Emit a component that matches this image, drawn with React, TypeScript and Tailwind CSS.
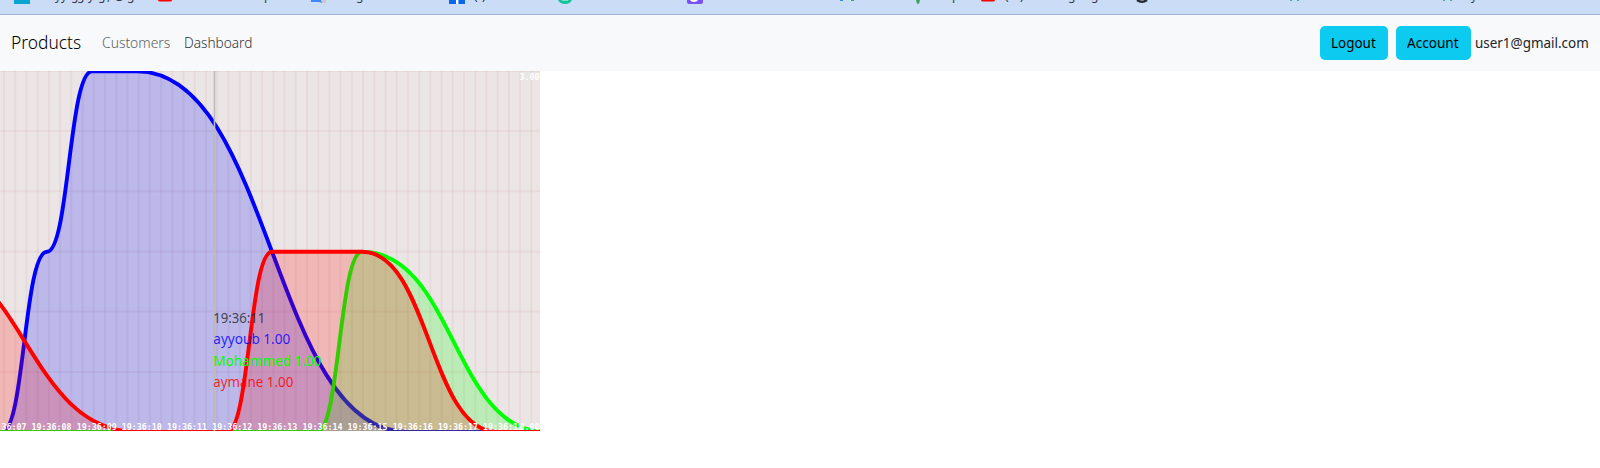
import type { ReactNode } from 'react';

const grid = Array.from({ length: 49 }, (_, i) => 4 + i * 11.22);
const rows = [0, 60, 120.3, 180.7, 240.5, 301];
const labels = ['19:36:07', '19:36:08', '19:36:09', '19:36:10', '19:36:11', '19:36:12', '19:36:13', '19:36:14', '19:36:15', '19:36:16', '19:36:17', '19:36:18'];

const series = [
  {
    line: 'M-10 361H2C24.5 361 24 180.7 47 180.7C69 180.7 69 .4 92 .4H137C272 .4 272 361 407 361H546',
    color: '#0000ff',
  },
  { line: 'M-10 361H317C339.5 361 339.5 180.7 362 180.7C453.7 180.7 453.7 361 545.5 361', color: '#00ff00' },
  {
    line: 'M-87.5 180.7C25 180.7 25 361 137.5 361H227C249.5 361 249.5 180.7 272 180.7H362C429.5 180.7 429.5 361 497 361H546',
    color: '#ff0000',
  },
];

const readings = [
  { text: '19:36:11', y: 251.7, width: 52, color: '#212529' },
  { text: 'ayyoub 1.00', y: 273.2, width: 77, color: '#0000ff' },
  { text: 'Mohammed 1.00', y: 295, width: 108, color: '#00ff00' },
  { text: 'aymane 1.00', y: 316.4, width: 80, color: '#ff0000' },
];

function Chart() {
  return (
    <svg width="540" height="360" viewBox="0 0 540 360" className="block overflow-hidden">
      <rect width="540" height="360" fill="#ebe6e5" />
      <g stroke="#a02c2c" strokeOpacity=".06" strokeWidth="2">
        {grid.map((x) => <path key={x} d={`M${x} 0V360`} />)}
        {rows.map((y) => <path key={y} d={`M0 ${y}H540`} />)}
      </g>
      {series.map((s) => (
        <g key={s.color}>
          <path d={`${s.line}V363H-88Z`} fill={s.color} fillOpacity=".2" />
          <path d={s.line} fill="none" stroke={s.color} strokeWidth="3.9" />
        </g>
      ))}
      <path d="M214.5 0V360" stroke="#bbbbbb" strokeWidth="1.6" />
      <g fill="#ffffff" fontSize="8" fontWeight="bold" fontFamily="'DejaVu Sans Mono', monospace">
        {labels.map((t, i) => (
          <text key={t} x={-13.6 + i * 45.15} y="359" textLength="40" lengthAdjust="spacingAndGlyphs">{t}</text>
        ))}
        <text x="519.5" y="9" textLength="20" lengthAdjust="spacingAndGlyphs">3.00</text>
        <text x="519.5" y="359" textLength="20" lengthAdjust="spacingAndGlyphs">0.00</text>
      </g>
      <g fontSize="14" fillOpacity=".82" fontFamily="'Noto Sans', sans-serif">
        {readings.map((r) => (
          <text key={r.text} x="213.3" y={r.y} fill={r.color} fillOpacity={r.color === '#00ff00' ? 1 : 0.82} textLength={r.width} lengthAdjust="spacingAndGlyphs">{r.text}</text>
        ))}
      </g>
    </svg>
  );
}

const marks: [string, number][] = [
  ['y', 55], ['y', 61], ['g', 71], ['g', 77], ['y', 88], ['g', 98], [',', 107], ['@', 114], ['g', 127],
  ['p', 264], ['g', 356], ['(', 474], [')', 482], ['p', 952], ['(', 1005], [')', 1020], ['g', 1068], ['g', 1091], ['y', 1471],
];

function Bookmarks() {
  return (
    <svg width="1600" height="14" viewBox="0 0 1600 14" className="block">
      <g fill="#33384a" fontSize="12" fontFamily="'Noto Sans', sans-serif">
        {marks.map(([t, x]) => <text key={x} x={x} y="0">{t}</text>)}
      </g>
      <path d="M14 0h16v4H14z" fill="#08a5d3" />
      <path d="M158 0h14q0 1.6-2 1.6h-10q-2 0-2-1.6z" fill="#f00" />
      <path d="M311 0h10l1 3-3-1h-8z" fill="#4285f4" />
      <path d="M322 0h4v3h-4z" fill="#c6c8cc" />
      <path d="M449 0h16v4h-16z" fill="#0866e8" />
      <path d="M456 0h2.4v4H456z" fill="#fff" />
      <path d="M558 0h14q-2 4-7 4t-7-4z" fill="#15c39a" />
      <path d="M562 0h6v1h-6z" fill="#7fe0c9" />
      <path d="M687 0h16v2q0 2-2 2h-12q-2 0-2-2z" fill="#7950f2" />
      <path d="M690 0h8q-1 2-4 2t-4-2z" fill="#fff" />
      <path d="M840 0h3v1h-3z" fill="#4285f4" />
      <path d="M851 0h3v1h-3z" fill="#34a853" />
      <path d="M916 0h4l-1 3.8h-2z" fill="#34a853" />
      <path d="M981 0h14q0 1.6-2 1.6h-10q-2 0-2-1.6z" fill="#f00" />
      <path d="M1137 0q5 3.5 10 0" stroke="#24292f" strokeWidth="2.4" fill="none" />
      <path d="M1290 0h2v1h-2zM1297 0h2v1h-2zM1443 0h2v1h-2zM1450 0h2v1h-2z" fill="#45b39c" />
    </svg>
  );
}

function Label({ children, className }: { children: ReactNode; className: string }) {
  return <span className={`inline-block origin-left whitespace-nowrap ${className}`}>{children}</span>;
}

export default function App() {
  return (
    <div className="h-[468px] w-[1600px] overflow-hidden bg-white font-['Noto_Sans',sans-serif] text-[#212529]">
      <div className="h-[15px] border-b border-[#a3b1d3] bg-[#cbdcf6]">
        <Bookmarks />
      </div>
      <nav className="flex h-14 items-center bg-[#f8f9fb] pb-0.5 pl-[11px]">
        <a className="w-[91px] text-[18px] font-light text-black"><Label className="scale-x-[.965]">Products</Label></a>
        <a className="w-[82px] pt-px text-[14px] font-light text-[#5c6064]"><Label className="scale-x-[.99]">Customers</Label></a>
        <a className="pt-px text-[14px] font-light text-[#303438]"><Label className="scale-x-[.975]">Dashboard</Label></a>
        <div className="ml-auto flex items-center pt-0.5">
          <button className="mr-2 h-[34px] w-[68px] rounded-[5px] bg-[#0dcaf0] pb-0.5 pl-[11px] text-left text-[14px] text-black"><Label className="scale-x-[.96]">Logout</Label></button>
          <button className="h-[34px] w-[75px] rounded-[5px] bg-[#0dcaf0] pb-0.5 pl-[11px] text-left text-[14px] text-black"><Label className="scale-x-[.97]">Account</Label></button>
          <span className="ml-1 w-[125px] pb-0.5 text-[14px]"><Label className="scale-x-[.96]">user1@gmail.com</Label></span>
        </div>
      </nav>
      <Chart />
    </div>
  );
}
